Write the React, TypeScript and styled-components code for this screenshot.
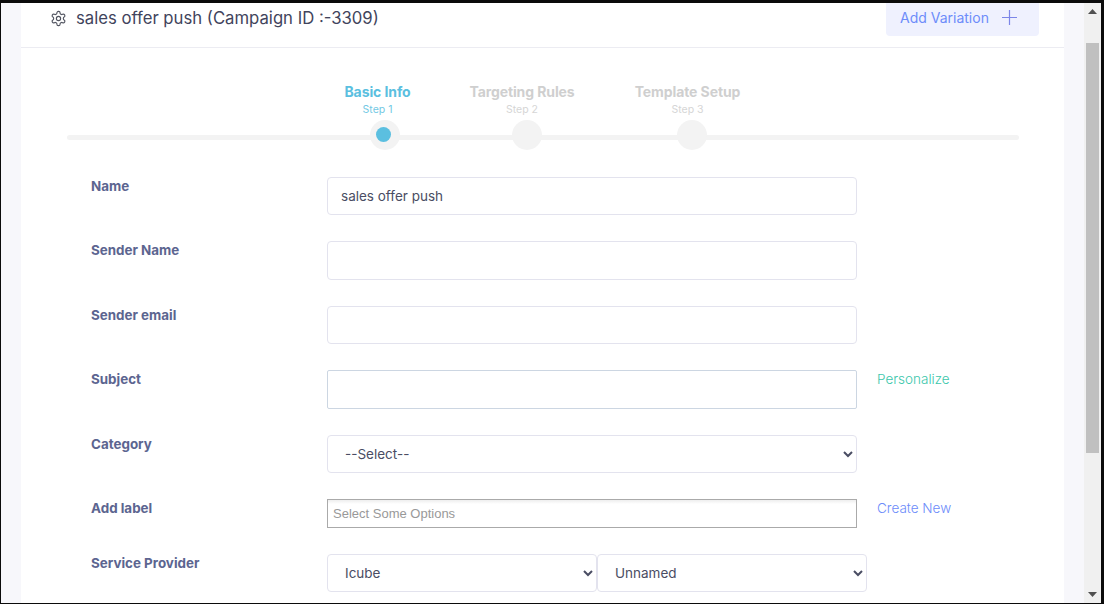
import React from "react";
import styled, { createGlobalStyle } from "styled-components";

const Global = createGlobalStyle`
  html, body { margin: 0; padding: 0; height: 100%; overflow: hidden; background: #000; }
  #root { height: 100%; }
  * { box-sizing: border-box; }
`;

const Frame = styled.div`
  height: 604px;
  padding: 3px 3px 1px 1px;
  background: #0b0b0b;
  display: flex;
  font-family: "Inter", "Open Sans", sans-serif;
`;
const Page = styled.main`
  flex: 1;
  background: #f7f7fb;
  padding: 0 20px;
  overflow: hidden;
`;
const Card = styled.section`
  background: #fff;
  height: 100%;
`;
const Header = styled.header`
  height: 45px;
  border-bottom: 1px solid #ececf2;
  display: flex;
  justify-content: space-between;
  padding: 0 25px 0 29px;
`;
const TitleGroup = styled.div`
  display: flex;
  align-items: center;
  gap: 9px;
  height: 30px;
`;
const Title = styled.h1`
  margin: 0;
  font-size: 16.7px;
  font-weight: 400;
  color: #41445c;
`;
const AddButton = styled.button`
  width: 153px;
  height: 33px;
  border: 0;
  border-radius: 0 0 4px 4px;
  background: #eff1fe;
  color: #6d8cfa;
  font: 400 14px "Inter", sans-serif;
  display: flex;
  align-items: center;
  gap: 13px;
  padding: 0 0 4px 14px;
`;
const Stepper = styled.div`
  position: relative;
  margin: 36px 45px 0 46px;
  height: 70px;
  display: flex;
  justify-content: flex-start;
  padding-left: 278px;
  gap: 59px;
`;
const Track = styled.div`
  position: absolute;
  left: 0;
  right: 0;
  top: 51px;
  height: 5px;
  background: #f3f3f3;
  border-radius: 3px;
`;
const Step = styled.div<{ $w: number; $active?: boolean }>`
  position: relative;
  width: ${(p) => p.$w}px;
  display: flex;
  flex-direction: column;
  align-items: center;
  color: ${(p) => (p.$active ? "#5bbfe0" : "#cfcfcf")};
`;
const StepName = styled.div`
  font-size: 14px;
  line-height: 16px;
  font-weight: 700;
  letter-spacing: -0.1px;
  white-space: nowrap;
`;
const StepSub = styled.div`
  font-size: 10.5px;
  line-height: 14px;
  margin-top: 3px;
  opacity: 0.85;
`;
const Knob = styled.div<{ $shift: number }>`
  position: relative;
  width: 30px;
  height: 30px;
  margin: 3px 0 0 ${(p) => p.$shift}px;
  border-radius: 50%;
  background: #f3f3f3;
  display: flex;
  align-items: center;
  justify-content: center;
`;
const Dot = styled.div`
  width: 15px;
  height: 15px;
  margin: 0 3px 1px 0;
  border-radius: 50%;
  background: #5bbfe0;
`;
const Form = styled.form`
  margin-top: 23px;
  padding-left: 70px;
  display: flex;
  flex-direction: column;
`;
const Row = styled.div`
  display: grid;
  grid-template-columns: 236px 530px auto;
  margin-bottom: 26px;
  align-items: start;
`;
const Label = styled.label`
  font-size: 13.4px;
  font-weight: 700;
  line-height: 18px;
  color: #5c6590;
`;
const Input = styled.input<{ $strong?: boolean }>`
  width: 100%;
  height: 38.4px;
  border: 1px solid ${(p) => (p.$strong ? "#ccd6e2" : "#e3e3ee")};
  border-radius: ${(p) => (p.$strong ? "2px" : "4px")};
  padding: 0 13px;
  font: 400 13.5px "Inter", sans-serif;
  color: #4a4d63;
  background: #fff;
  outline: none;
`;
const Select = styled.select`
  width: 100%;
  height: 38.4px;
  border: 1px solid #e3e3ee;
  border-radius: 4px;
  padding: 0 13px;
  font: 400 13.5px "Inter", sans-serif;
  color: #4a4d63;
  background: #fff;
  outline: none;
`;
const Chosen = styled.div`
  height: 29px;
  border: 1px solid #aaa;
  padding-left: 5px;
  display: flex;
  align-items: center;
  font: 400 13px "Liberation Sans", Arial, sans-serif;
  color: #999;
  background: linear-gradient(#eee 0%, #fff 15%);
`;
const SideLink = styled.a<{ $color: string }>`
  margin-left: 20px;
  font-size: 13.5px;
  font-weight: 300;
  line-height: 18px;
  color: ${(p) => p.$color};
  white-space: nowrap;
`;
const SelectPair = styled.div`
  display: grid;
  grid-template-columns: 270px 270px;
  width: 540px;
`;
const Scrollbar = styled.aside`
  width: 17px;
  background: #f0f0f0;
  display: flex;
  flex-direction: column;
  align-items: center;
  justify-content: space-between;
`;
const ArrowBtn = styled.div`
  height: 17px;
  width: 100%;
  display: flex;
  align-items: center;
  justify-content: center;
`;
const Thumb = styled.div`
  width: 13px;
  height: 410px;
  background: #c0c0c0;
  margin-top: 23px;
`;
const ScrollSpacer = styled.div`
  flex: 1;
`;

const fields: { label: string; value?: string; strong?: boolean; link?: string; color?: string }[] = [
  { label: "Name", value: "sales offer push" },
  { label: "Sender Name" },
  { label: "Sender email" },
  { label: "Subject", strong: true, link: "Personalize", color: "#3cc7ab" },
];

export default function App() {
  return (
    <>
      <Global />
      <Frame>
        <Page>
          <Card>
            <Header>
              <TitleGroup>
                <svg width="17" height="17" viewBox="0 0 24 24" fill="none" stroke="#50535f" strokeWidth="1.6" strokeLinecap="round" strokeLinejoin="round">
                  <path d="M12.22 2h-.44a2 2 0 0 0-2 2v.18a2 2 0 0 1-1 1.73l-.43.25a2 2 0 0 1-2 0l-.15-.08a2 2 0 0 0-2.73.73l-.22.38a2 2 0 0 0 .73 2.73l.15.1a2 2 0 0 1 1 1.72v.51a2 2 0 0 1-1 1.74l-.15.09a2 2 0 0 0-.73 2.73l.22.38a2 2 0 0 0 2.73.73l.15-.08a2 2 0 0 1 2 0l.43.25a2 2 0 0 1 1 1.73V20a2 2 0 0 0 2 2h.44a2 2 0 0 0 2-2v-.18a2 2 0 0 1 1-1.73l.43-.25a2 2 0 0 1 2 0l.15.08a2 2 0 0 0 2.73-.73l.22-.39a2 2 0 0 0-.73-2.73l-.15-.08a2 2 0 0 1-1-1.74v-.5a2 2 0 0 1 1-1.74l.15-.09a2 2 0 0 0 .73-2.73l-.22-.38a2 2 0 0 0-2.73-.73l-.15.08a2 2 0 0 1-2 0l-.43-.25a2 2 0 0 1-1-1.73V4a2 2 0 0 0-2-2z" />
                  <circle cx="12" cy="12" r="3" />
                </svg>
                <Title>sales offer push (Campaign ID :-3309)</Title>
              </TitleGroup>
              <AddButton type="button">
                Add Variation
                <svg width="15" height="15" viewBox="0 0 15 15" stroke="#7c86e8" strokeWidth="1.2">
                  <path d="M7.5 0v15M0 7.5h15" />
                </svg>
              </AddButton>
            </Header>
            <Stepper>
              <Track />
              <Step $w={65} $active>
                <StepName>Basic Info</StepName>
                <StepSub>Step 1</StepSub>
                <Knob $shift={14}><Dot /></Knob>
              </Step>
              <Step $w={106}>
                <StepName>Targeting Rules</StepName>
                <StepSub>Step 2</StepSub>
                <Knob $shift={10} />
              </Step>
              <Step $w={107}>
                <StepName>Template Setup</StepName>
                <StepSub>Step 3</StepSub>
                <Knob $shift={8} />
              </Step>
            </Stepper>
            <Form>
              {fields.map((f) => (
                <Row key={f.label}>
                  <Label>{f.label}</Label>
                  <Input $strong={f.strong} defaultValue={f.value} />
                  {f.link && <SideLink $color={f.color!}>{f.link}</SideLink>}
                </Row>
              ))}
              <Row>
                <Label>Category</Label>
                <Select defaultValue="--Select--"><option>--Select--</option></Select>
              </Row>
              <Row>
                <Label>Add label</Label>
                <Chosen>Select Some Options</Chosen>
                <SideLink $color="#6d8cfa">Create New</SideLink>
              </Row>
              <Row>
                <Label>Service Provider</Label>
                <SelectPair>
                  <Select><option>Icube</option></Select>
                  <Select><option>Unnamed</option></Select>
                </SelectPair>
              </Row>
            </Form>
          </Card>
        </Page>
        <Scrollbar>
          <ArrowBtn>
            <svg width="9" height="5" viewBox="0 0 9 5"><path d="M4.5 0L9 5H0z" fill="#505050" /></svg>
          </ArrowBtn>
          <Thumb />
          <ScrollSpacer />
          <ArrowBtn>
            <svg width="9" height="5" viewBox="0 0 9 5"><path d="M0 0h9L4.5 5z" fill="#505050" /></svg>
          </ArrowBtn>
        </Scrollbar>
      </Frame>
    </>
  );
}
